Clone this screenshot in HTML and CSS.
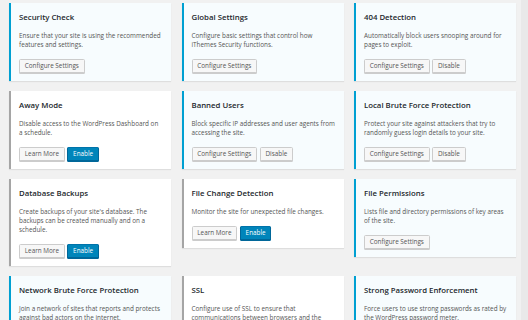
FILE: index.html
```html
<!DOCTYPE html>
<html lang="en">
<head>
    <meta charset="UTF-8">
    <meta name="viewport" content="width=device-width, initial-scale=1.0">
    <title>Security Settings</title>
    <link rel="stylesheet" href="styles.css">
</head>
<body>

<div class="page">
    <div class="modules">
        <div class="card active">
            <h3>Security Check</h3>
            <p>Ensure that your site is using the recommended features and settings.</p>
            <div class="actions">
                <button class="btn">Configure Settings</button>
            </div>
        </div>
        <div class="card active">
            <h3>Global Settings</h3>
            <p>Configure basic settings that control how iThemes Security functions.</p>
            <div class="actions">
                <button class="btn">Configure Settings</button>
            </div>
        </div>
        <div class="card active">
            <h3>404 Detection</h3>
            <p>Automatically block users snooping around for pages to exploit.</p>
            <div class="actions">
                <button class="btn">Configure Settings</button>
                <button class="btn">Disable</button>
            </div>
        </div>

        <div class="card">
            <h3>Away Mode</h3>
            <p>Disable access to the WordPress Dashboard on a schedule.</p>
            <div class="actions">
                <button class="btn">Learn More</button>
                <button class="btn primary">Enable</button>
            </div>
        </div>
        <div class="card active">
            <h3>Banned Users</h3>
            <p>Block specific IP addresses and user agents from accessing the site.</p>
            <div class="actions">
                <button class="btn">Configure Settings</button>
                <button class="btn">Disable</button>
            </div>
        </div>
        <div class="card active">
            <h3>Local Brute Force Protection</h3>
            <p>Protect your site against attackers that try to randomly guess login details to your site.</p>
            <div class="actions">
                <button class="btn">Configure Settings</button>
                <button class="btn">Disable</button>
            </div>
        </div>

        <div class="card">
            <h3>Database Backups</h3>
            <p>Create backups of your site's database. The backups can be created manually and on a schedule.</p>
            <div class="actions">
                <button class="btn">Learn More</button>
                <button class="btn primary">Enable</button>
            </div>
        </div>
        <div class="card">
            <h3>File Change Detection</h3>
            <p>Monitor the site for unexpected file changes.</p>
            <div class="actions">
                <button class="btn">Learn More</button>
                <button class="btn primary">Enable</button>
            </div>
        </div>
        <div class="card active">
            <h3>File Permissions</h3>
            <p>Lists file and directory permissions of key areas of the site.</p>
            <div class="actions">
                <button class="btn">Configure Settings</button>
            </div>
        </div>

        <div class="card active">
            <h3>Network Brute Force Protection</h3>
            <p>Join a network of sites that reports and protects against bad actors on the internet.</p>
            <div class="actions">
                <button class="btn">Configure Settings</button>
                <button class="btn">Disable</button>
            </div>
        </div>
        <div class="card">
            <h3>SSL</h3>
            <p>Configure use of SSL to ensure that communications between browsers and the server are secure.</p>
            <div class="actions">
                <button class="btn">Learn More</button>
                <button class="btn primary">Enable</button>
            </div>
        </div>
        <div class="card active">
            <h3>Strong Password Enforcement</h3>
            <p>Force users to use strong passwords as rated by the WordPress password meter.</p>
            <div class="actions">
                <button class="btn">Configure Settings</button>
                <button class="btn">Disable</button>
            </div>
        </div>
    </div>
    <div class="sidebar"></div>
</div>

</body>
</html>
```

FILE: styles.css
```css
html {
    overflow: hidden;
}
body {
    font-family: 'Open Sans', 'Liberation Sans', sans-serif;
    background-color: #f1f1f1;
    margin: 0;
    padding: 0;
    color: #444;
}
.page {
    display: flex;
    height: 320px;
}
.modules {
    display: grid;
    grid-template-columns: repeat(3, 162px);
    column-gap: 10.5px;
    row-gap: 9.5px;
    align-items: start;
    align-content: start;
    padding: 3px 0 0 9px;
}
.sidebar {
    margin-left: 5px;
    flex: 1;
    background-color: #e9e9e9;
}
.card {
    background-color: #fff;
    border-left: 2px solid #a5a5a5;
    box-shadow: 0 1px 1px rgba(0, 0, 0, 0.08);
    padding: 9px 8px 8px 8px;
}
.card.active {
    background-color: #f7fcfe;
    border-left-color: #00a0d2;
}
h3 {
    font-size: 7.8px;
    font-weight: 600;
    line-height: 10px;
    color: #23282d;
    margin: 0 0 9px 0;
}
p {
    font-size: 6.35px;
    line-height: 9.4px;
    color: #555;
    margin: 0 0 9.5px 0;
}
.actions {
    display: flex;
    gap: 2.5px;
}
.btn {
    font-family: inherit;
    font-size: 6.35px;
    line-height: 12px;
    height: 14px;
    padding: 0 4.8px;
    color: #555;
    background-color: #f7f7f7;
    border: 1px solid #ccc;
    border-radius: 1.5px;
    box-shadow: 0 1px 0 #ccc;
    cursor: pointer;
}
.btn.primary {
    color: #fff;
    background-color: #0085ba;
    border-color: #0073aa #006799 #006799;
    box-shadow: 0 1px 0 #006799;
}
```
